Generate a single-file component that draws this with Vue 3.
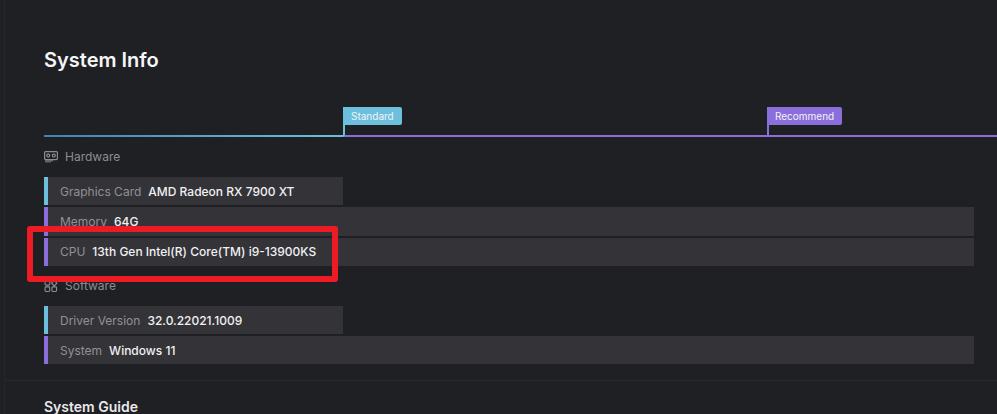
<script setup>
const levels = [
  { name: 'Standard', tone: 'blue' },
  { name: 'Recommend', tone: 'purple' }
]

const hardware = [
  { label: 'Graphics Card', value: 'AMD Radeon RX 7900 XT', tone: 'blue' },
  { label: 'Memory', value: '64G', tone: 'purple' },
  { label: 'CPU', value: '13th Gen Intel(R) Core(TM) i9-13900KS', tone: 'purple' }
]

const software = [
  { label: 'Driver Version', value: '32.0.22021.1009', tone: 'blue' },
  { label: 'System', value: 'Windows 11', tone: 'purple' }
]
</script>

<template>
  <div class="page">
    <section class="info">
      <h1 class="title">System Info</h1>

      <div class="rail">
        <div class="rail-start"></div>
        <div v-for="level in levels" :key="level.name" :class="['rail-part', level.tone]">
          <span class="flag">{{ level.name }}</span>
        </div>
      </div>

      <div class="group-head">
        <svg class="group-icon" viewBox="0 0 14 12" fill="none" stroke="currentColor" stroke-width="1.2">
          <rect x="0.6" y="0.6" width="12.8" height="8" rx="1" />
          <circle cx="4.2" cy="4.6" r="1.5" />
          <circle cx="9.8" cy="4.6" r="1.5" />
          <path d="M2 9v2.4M4 9v2.4M6 9v2.4M8 9v1.4" />
        </svg>
        <span>Hardware</span>
      </div>
      <div class="rows">
        <div v-for="row in hardware" :key="row.label" :class="['row', row.tone]">
          <span class="label">{{ row.label }}</span>
          <span class="value">{{ row.value }}</span>
        </div>
      </div>

      <div class="group-head">
        <svg class="group-icon" viewBox="0 0 14 13" fill="none" stroke="currentColor" stroke-width="1.2">
          <rect x="0.6" y="0.6" width="5" height="5" rx="1" />
          <path d="M10.5 0.6l2.9 2.9-2.9 2.9-2.9-2.9z" />
          <rect x="0.6" y="7.4" width="5" height="5" rx="1" />
          <rect x="8" y="7.4" width="5" height="5" rx="1" />
        </svg>
        <span>Software</span>
      </div>
      <div class="rows">
        <div v-for="row in software" :key="row.label" :class="['row', row.tone]">
          <span class="label">{{ row.label }}</span>
          <span class="value">{{ row.value }}</span>
        </div>
      </div>
    </section>

    <section class="guide">
      <h2 class="guide-title">System Guide</h2>
    </section>

    <!-- annotation drawn on top of the screenshot -->
    <div class="marker"></div>
  </div>
</template>

<style>
html,
body {
  margin: 0;
  background: #1f2024;
  overflow: hidden;
}
</style>

<style scoped>
.page {
  position: relative;
  box-sizing: border-box;
  width: 993px;
  height: 414px;
  margin-left: 4px;
  overflow: hidden;
  background: #1f2024;
  border-left: 1px solid #26272b;
  font-family: Inter, "Liberation Sans", sans-serif;
}

.info {
  box-sizing: border-box;
  height: 381px;
  padding: 48px 0 0 39px;
  border-bottom: 1px solid #2a2b2f;
}

.title {
  margin: 0;
  font-size: 20px;
  line-height: 24px;
  font-weight: 600;
  color: #f5f6f8;
}

.rail {
  display: flex;
  margin-top: 35px;
  height: 30px;
}

.rail-start {
  width: 299px;
  border-bottom: 2px solid;
  border-image: linear-gradient(90deg, #3f83b8, #6cc0dd) 1;
}

.rail-part {
  box-sizing: border-box;
  border-bottom: 2px solid #8a6fdc;
  border-left: 2px solid;
}

.rail-part.blue {
  width: 424px;
  border-left-color: #6cc0dd;
}

.rail-part.purple {
  flex: 1;
  border-left-color: #8a6fdc;
}

.flag {
  display: block;
  width: fit-content;
  height: 18px;
  margin-left: -2px;
  padding: 0 8px;
  line-height: 18px;
  font-size: 10px;
  color: #f2f3f5;
  border-radius: 0 2px 2px 0;
}

.rail-part.blue .flag {
  background: #6cc0dd;
}

.rail-part.purple .flag {
  background: #8a6fdc;
}

.group-head {
  display: flex;
  align-items: center;
  gap: 7px;
  height: 16px;
  margin-top: 12px;
  font-size: 12px;
  line-height: 16px;
  color: #8c8d92;
}

.group-icon {
  width: 14px;
  height: 12px;
}

.rows {
  display: flex;
  flex-direction: column;
  gap: 2px;
  width: 930px;
  margin-top: 12px;
}

.row {
  box-sizing: border-box;
  display: flex;
  align-items: center;
  gap: 7px;
  height: 28.3px;
  padding-left: 12px;
  border-left: 4px solid;
  background: #343438;
  font-size: 12px;
}

.row.blue {
  width: 299px;
  border-left-color: #6cc0dd;
}

.row.purple {
  border-left-color: #8a6fdc;
}

.label {
  color: #909196;
}

.value {
  color: #f0f1f3;
  font-weight: 450;
}

.guide {
  padding: 17px 0 0 39px;
}

.guide-title {
  margin: 0;
  font-size: 14px;
  line-height: 18px;
  font-weight: 600;
  color: #e8e9ec;
}

.marker {
  position: absolute;
  left: 22px;
  top: 226px;
  box-sizing: border-box;
  width: 311px;
  height: 56px;
  border: 6px solid #ed1c24;
  border-radius: 3px;
}
</style>
